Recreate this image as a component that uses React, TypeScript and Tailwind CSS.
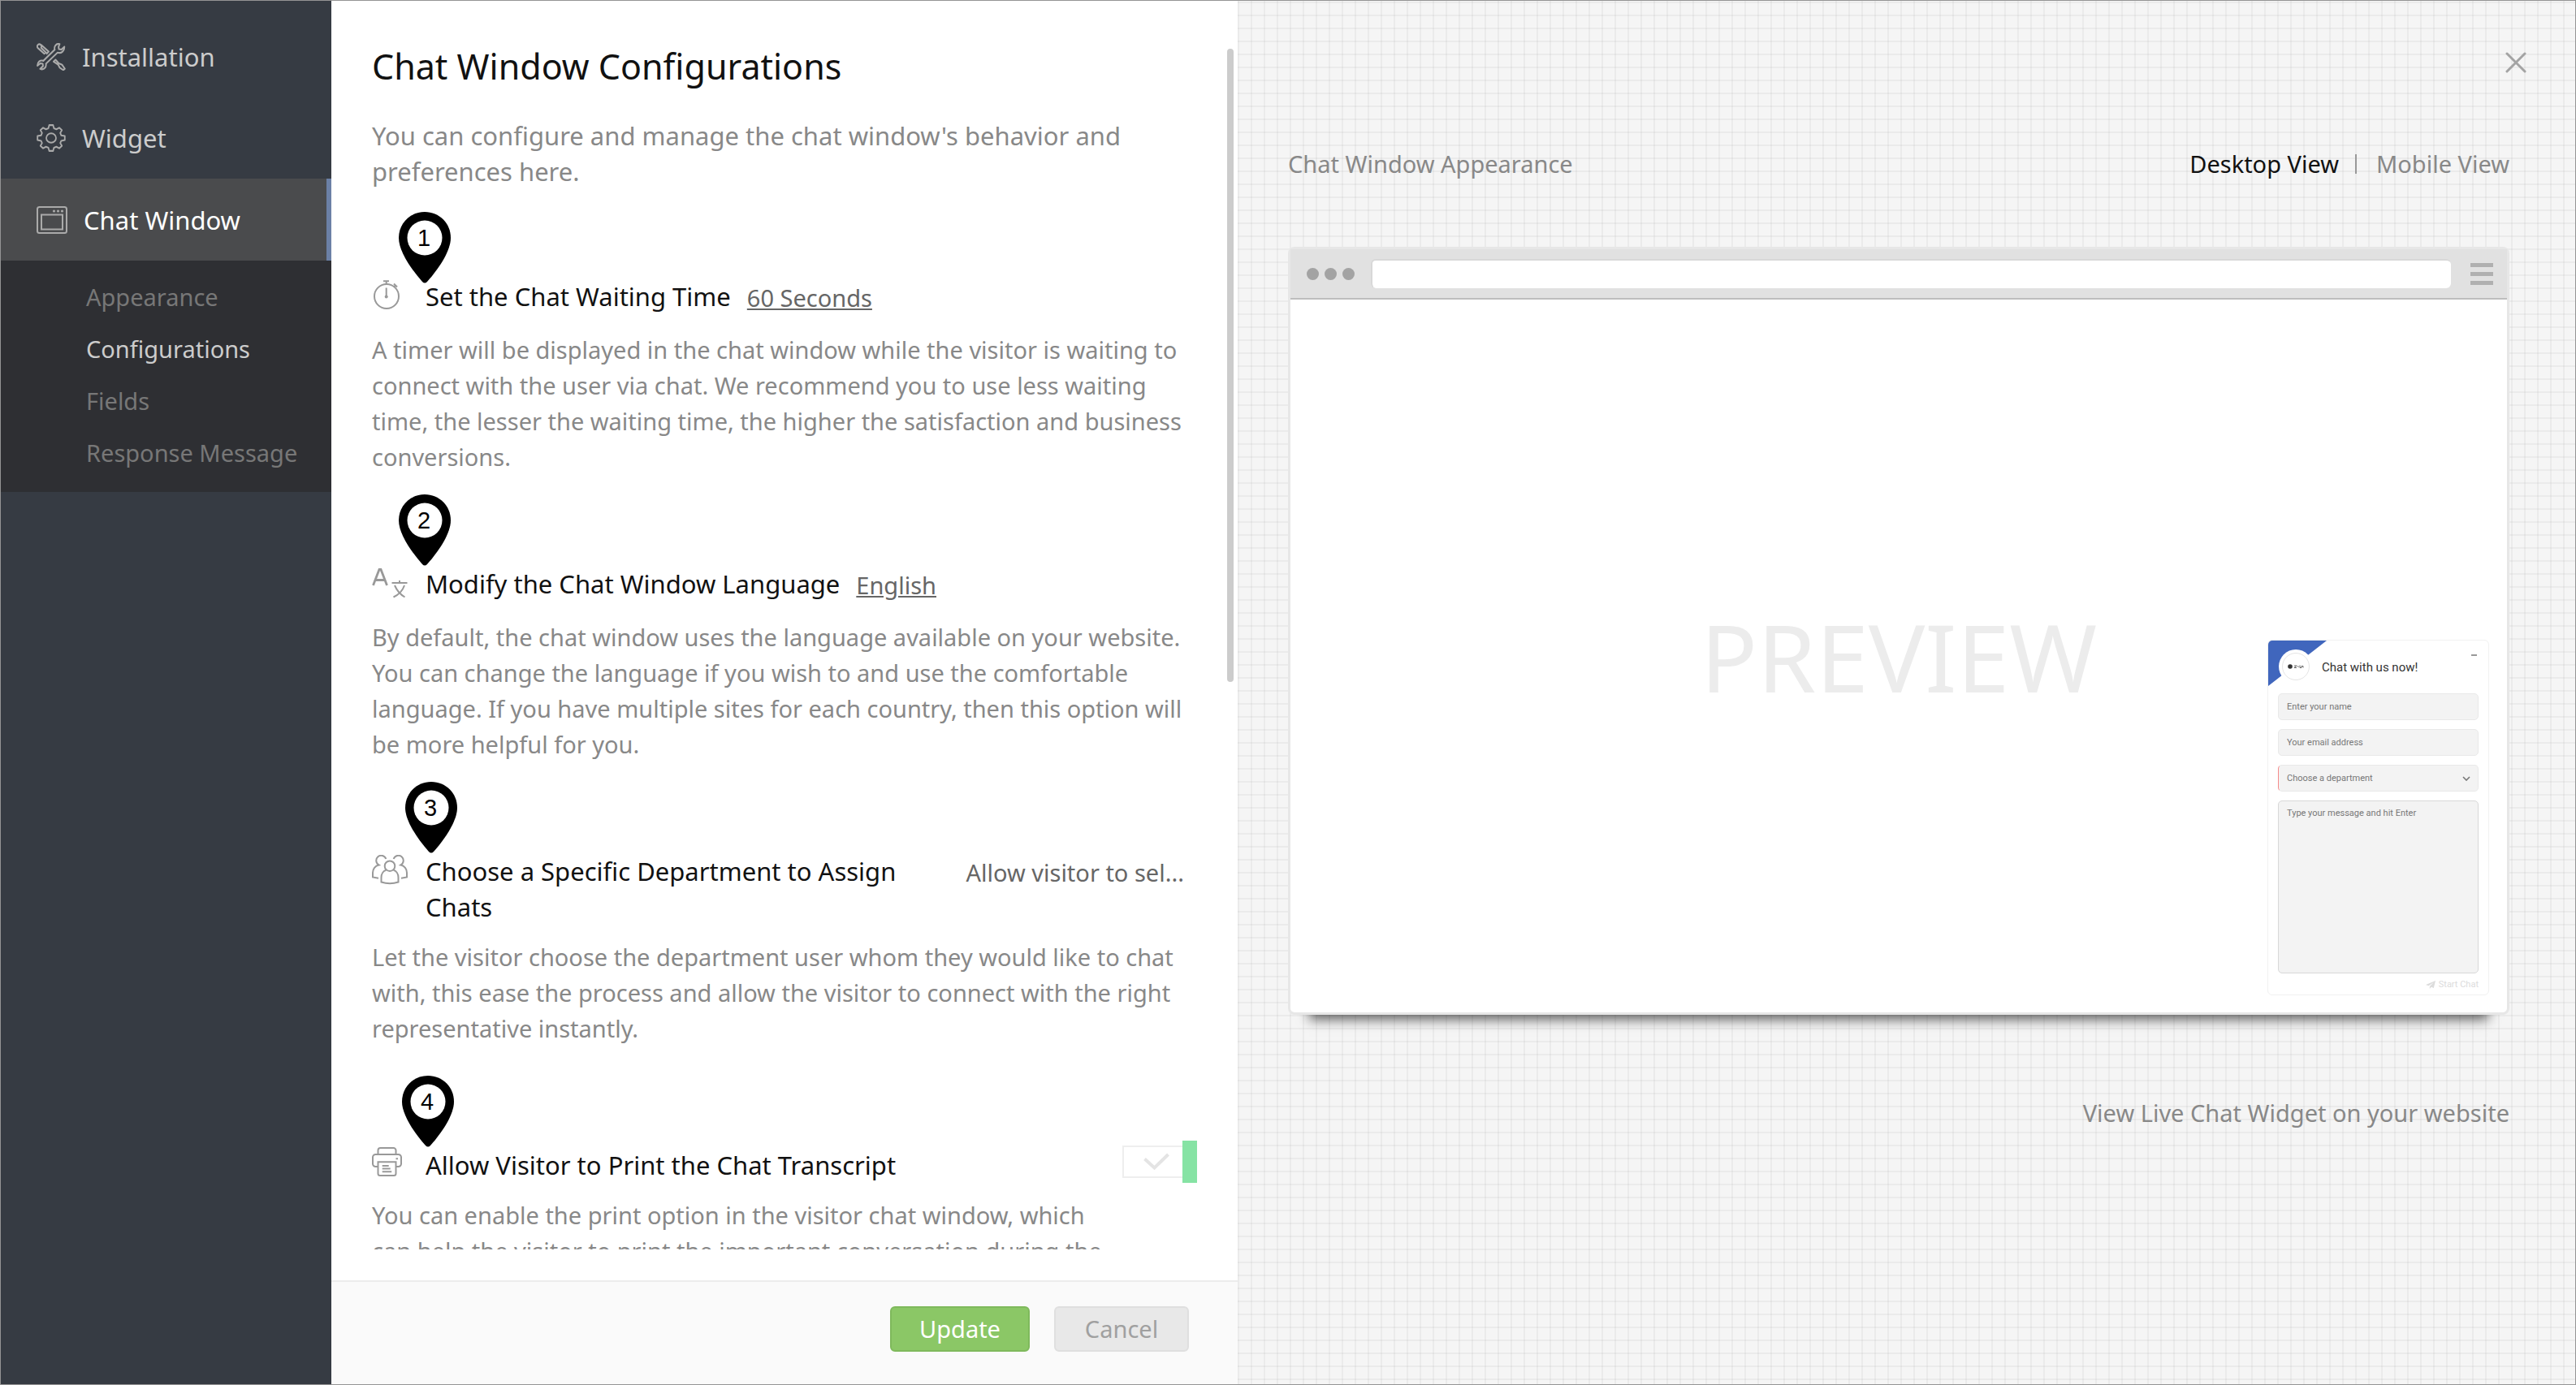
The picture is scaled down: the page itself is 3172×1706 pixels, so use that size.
import React from "react";

const navItems = [
  { label: "Installation", icon: "tools" },
  { label: "Widget", icon: "gear" },
];

const subItems = [
  { label: "Appearance", active: false },
  { label: "Configurations", active: true },
  { label: "Fields", active: false },
  { label: "Response Message", active: false },
];

const ToolsIcon = () => (
  <svg
    viewBox="0 0 36 30"
    className="h-[34px] w-[36px] shrink-0"
    preserveAspectRatio="none"
    fill="none"
    stroke="currentColor"
    strokeWidth="1.9"
    strokeLinejoin="round"
  >
    <path d="M13 11.5 5.6 5.2A2.6 2.6 0 0 0 1.8 1.8 2.6 2.6 0 0 0 1.6 5.4L9.5 11.6 12 9.8" />
    <path d="M5.2 1.6 15 9.3 12 12" />
    <path d="M28.4 1.2c-4-1.2-7.2 2.2-6 6L8.400 19.300c-3.800-1.200-7.400 1.400-7.300 5.400l3.500-2.600 3 .4.400 2.600-3.600 3c4 1.400 8-1.400 7.200-5.600L25.900 10.400c4.600 1.200 8.200-1.400 8.400-6.400l-3.800 3.100-3-.5-.4-2.400Z" />
    <path d="m21 20.200 2.400-2 4 3.800 4 1.600 3.400 4.300-1.800 1.500-4.400-2.600-2.100-3.400Z" />
  </svg>
);

const GearIcon = () => (
  <svg
    viewBox="0 0 36 30"
    preserveAspectRatio="none"
    className="h-[34px] w-[36px] shrink-0"
    fill="none"
    stroke="currentColor"
    strokeWidth="1.8"
    strokeLinejoin="round"
  >
    <path d="M15.600 1h4.800l1 3.400 3 1.100 3.500-1.700 3.300 2.700-2 3 1.200 2.600 4.400.8v4.200l-4.400.9-1.200 2.500 2 3-3.300 2.700-3.500-1.700-3 1.100-1 3.400h-4.800l-1-3.400-3-1.100-3.500 1.700-3.300-2.700 2-3-1.200-2.500L1.200 17.100v-4.200l4.400-.8 1.200-2.600-2-3 3.300-2.700 3.500 1.700 3-1.100Z" />
    <ellipse cx="18" cy="15" rx="6" ry="5" />
  </svg>
);

const WindowIcon = () => (
  <svg
    viewBox="0 0 38 34"
    className="h-[34px] w-[38px] shrink-0"
    fill="none"
    stroke="currentColor"
    strokeWidth="2"
  >
    <rect x="1" y="1" width="36" height="32" rx="2.500" />
    <rect x="6" y="10.500" width="26" height="18" />
    <g fill="currentColor" stroke="none">
      <circle cx="21.500" cy="6" r="1.600" />
      <circle cx="26.500" cy="6" r="1.600" />
      <circle cx="31.500" cy="6" r="1.600" />
    </g>
  </svg>
);

const StopwatchIcon = () => (
  <svg
    viewBox="0 0 34 38"
    className="mt-[2px] h-[38px] w-[34px]"
    fill="none"
    stroke="currentColor"
    strokeWidth="2"
  >
    <circle cx="18" cy="20" r="15" />
    <path d="M14 1.200h7M17.700 1v4M17.700 9.500v11M27 4.500l4 4M29 6.500l-2 2" />
    <circle cx="17.700" cy="20.500" r="2" fill="currentColor" stroke="none" />
  </svg>
);

const LanguageIcon = () => (
  <svg
    viewBox="0 0 44 38"
    className="mt-[2px] h-[38px] w-[44px]"
    fill="none"
    stroke="currentColor"
    strokeWidth="2"
  >
    <path d="M1.500 22 9 2.500h2L18.500 22M4.500 15.500h11" strokeWidth="2.800" />
    <path d="M24.500 19h19M34 16v3M40 22c-2 6-6 11-13.500 14.500M28 22c2.500 6 6.500 11 12.500 14.500" />
  </svg>
);

const PeopleIcon = () => (
  <svg
    viewBox="0 0 44 38"
    className="mt-[2px] h-[38px] w-[44px]"
    fill="none"
    stroke="currentColor"
    strokeWidth="2"
  >
    <circle cx="22" cy="13.700" r="6.300" />
    <path d="M17.500 18.800c-3.500 1-6 4.700-6 9.200v5.500q10.500 3.500 21 0V28c0-4.500-2.500-8.200-6-9.200" />
    <path d="M17.300 5A6.200 6.200 0 1 0 8.500 12.500C4 13.500 1 17.500 1 22v5.500l7 1.200" />
    <path d="M26.700 5A6.200 6.200 0 1 1 35.500 12.500C40 13.500 43 17.500 43 22v5.500l-7 1.200" />
  </svg>
);

const PrinterIcon = () => (
  <svg
    viewBox="0 0 38 36"
    className="h-[36px] w-[38px]"
    fill="none"
    stroke="currentColor"
    strokeWidth="2"
  >
    <path d="M7.500 9V4A3 3 0 0 1 10.500 1h16a3 3 0 0 1 3 3v5" />
    <path d="M7.500 24H4.500A3.500 3.500 0 0 1 1 20.500V12.500A3.500 3.500 0 0 1 4.500 9h28a3.500 3.500 0 0 1 3.500 3.500v8a3.500 3.500 0 0 1-3.500 3.500h-3" />
    <path d="M7.500 18.300h22V32.500a2.500 2.500 0 0 1-2.500 2.500H10a2.500 2.500 0 0 1-2.500-2.500Z" />
    <path d="M12.700 23h8M12.700 26.600h10M12.700 30.200h11.500M29.500 14.300h2.500" />
  </svg>
);

const Pin = ({ number }: { number: number }) => (
  <svg viewBox="0 0 66 88" className="h-[88px] w-[66px]" aria-hidden="true">
    <path d="M33 0C15 0 1 14 1 32c0 15 13 36 29 54q3 3 6 0c16-18 29-39 29-54C65 14 51 0 33 0Z" />
    <circle cx="33" cy="32" r="21.500" fill="#fff" />
    <text
      x="32"
      y="42"
      textAnchor="middle"
      fontSize="29"
      fontFamily="Liberation Sans, sans-serif"
    >
      {number}
    </text>
  </svg>
);

const Setting = ({
  number,
  icon,
  title,
  value,
  lines,
  className,
  pinClass,
}: {
  number: number;
  icon: React.ReactNode;
  title: React.ReactNode;
  value: React.ReactNode;
  lines: string[];
  className: string;
  pinClass: string;
}) => (
  <article className={`relative ${className}`}>
    <div className={`absolute ${pinClass}`}>
      <Pin number={number} />
    </div>
    <div className="flex items-start">
      <span className="w-[66px] shrink-0 text-[#999]">{icon}</span>
      <h2 className="text-[31px] leading-[44px] text-[#111]">{title}</h2>
      {value}
    </div>
    <p className="mt-[18px] text-[29px] leading-[44px] text-[#888]">
      {lines.map((line) => (
        <span key={line} className="block">
          {line}
        </span>
      ))}
    </p>
  </article>
);

const Sidebar = () => (
  <nav className="flex w-[407px] shrink-0 flex-col bg-[#363b43] pt-[19px] text-[31px] leading-[44px] text-[#ccc]">
    {navItems.map((item) => (
      <a key={item.label} href="#" className="flex h-[100px] items-center gap-5 pl-11">
        <span className="text-[#aaa]">
          {item.icon === "tools" ? <ToolsIcon /> : <GearIcon />}
        </span>
        {item.label}
      </a>
    ))}
    <a
      href="#"
      className="flex h-[101px] items-center gap-5 border-r-[6px] border-[#6b80a6] bg-[#4a4b4d] pl-11 text-white"
    >
      <span className="text-[#aaa]">
        <WindowIcon />
      </span>
      Chat Window
    </a>
    <div className="flex flex-col bg-[#2e2f33] pt-[13px] pb-4">
      {subItems.map((item) => (
        <a
          key={item.label}
          href="#"
          className={`flex h-[64px] items-center pl-[105px] text-[29px] ${
            item.active ? "text-[#ccc]" : "text-[#777]"
          }`}
        >
          {item.label}
        </a>
      ))}
    </div>
  </nav>
);

const Configurations = () => (
  <section className="relative flex w-[1116px] shrink-0 flex-col bg-white">
    <div className="min-h-0 flex-1 overflow-hidden pt-[56px] pr-[66px] pl-[50px] whitespace-nowrap">
      <h1 className="text-[43px] leading-[50px] text-[#111]">
        Chat Window Configurations
      </h1>
      <p className="mt-[38px] text-[31px] leading-[44px] text-[#888]">
        You can configure and manage the chat window's behavior and
        <br />
        preferences here.
      </p>

      <Setting
        number={1}
        className="mt-[110px]"
        pinClass="-top-[82px] left-8"
        icon={<StopwatchIcon />}
        title="Set the Chat Waiting Time"
        value={
          <a href="#" className="ml-5 text-[29px] leading-[48px] text-[#666] underline">
            60 Seconds
          </a>
        }
        lines={[
          "A timer will be displayed in the chat window while the visitor is waiting to",
          "connect with the user via chat. We recommend you to use less waiting",
          "time, the lesser the waiting time, the higher the satisfaction and business",
          "conversions.",
        ]}
      />
      <Setting
        number={2}
        className="mt-[112px]"
        pinClass="-top-[88px] left-8"
        icon={<LanguageIcon />}
        title="Modify the Chat Window Language"
        value={
          <a href="#" className="ml-5 text-[29px] leading-[48px] text-[#666] underline">
            English
          </a>
        }
        lines={[
          "By default, the chat window uses the language available on your website.",
          "You can change the language if you wish to and use the comfortable",
          "language. If you have multiple sites for each country, then this option will",
          "be more helpful for you.",
        ]}
      />
      <Setting
        number={3}
        className="mt-[112px]"
        pinClass="-top-[88px] left-10"
        icon={<PeopleIcon />}
        title={
          <>
            Choose a Specific Department to Assign
            <br />
            Chats
          </>
        }
        value={
          <span className="ml-auto text-[29px] leading-[48px] text-[#666]">
            Allow visitor to sel...
          </span>
        }
        lines={[
          "Let the visitor choose the department user whom they would like to chat",
          "with, this ease the process and allow the visitor to connect with the right",
          "representative instantly.",
        ]}
      />
      <Setting
        number={4}
        className="mt-[124px]"
        pinClass="-top-[88px] left-9"
        icon={<PrinterIcon />}
        title="Allow Visitor to Print the Chat Transcript"
        value={
          <label className="-mt-2 -mr-4 ml-auto flex items-center">
            <input
              type="checkbox"
              defaultChecked
              aria-label="Allow visitor to print the chat transcript"
              className="sr-only"
            />
            <span className="flex h-10 w-[74px] items-center justify-center border-2 border-r-0 border-[#eee] pl-2">
              <svg viewBox="0 0 32 22" className="h-[22px] w-8" fill="none" stroke="#e4e4e4" strokeWidth="4">
                <path d="m1.500 7.500 12 11L30.500 2" />
              </svg>
            </span>
            <span className="h-[52px] w-[18px] bg-[#86e3a4]" />
          </label>
        }
        lines={[
          "You can enable the print option in the visitor chat window, which",
          "can help the visitor to print the important conversation during the",
        ]}
      />
    </div>
    <span className="absolute top-[59px] right-[5px] h-[780px] w-2 rounded-full bg-[#ccc]" />
    <footer className="mt-[38px] flex h-[128px] shrink-0 items-start justify-end gap-[30px] border-t-2 border-[#ececec] bg-[#fafafa] pt-[30px] pr-[60px] text-[29px]">
      <button className="h-14 w-[172px] rounded-md border-2 border-[#7fb95c] bg-[#8bc766] text-white">
        Update
      </button>
      <button className="h-14 w-[166px] rounded-md border-2 border-[#dfdfdf] bg-[#e8e8e8] text-[#a0a0a0]">
        Cancel
      </button>
    </footer>
  </section>
);

const ChatWidget = () => (
  <form className="absolute right-[22px] bottom-[21px] flex w-[273px] flex-col rounded-md border border-[#f1f1f1] bg-white px-3 pb-1 font-[Roboto,sans-serif] text-[11px] leading-4 text-[#777]">
    <svg viewBox="0 0 74 58" className="absolute top-0 left-0 h-[58px] w-[74px]">
      <path d="M0 56V5a5 5 0 0 1 5-5h67Z" fill="#4066bd" />
      <circle cx="34" cy="32" r="21" fill="#fff" />
      <circle cx="34" cy="32" r="16.500" fill="none" stroke="#e5e5e5" />
      <circle cx="27" cy="32" r="2.800" fill="#333" />
      <path d="M32 31h3l-3 2.500h3M36 31l1.500 2M39 30.500v3h2v-2h2v2" fill="none" stroke="#444" strokeWidth=".8" />
    </svg>
    <div className="flex h-[65px] items-center pl-[54px] text-[15px] text-[#333]">
      Chat with us now!
    </div>
    <button type="button" aria-label="Minimize" className="absolute top-[17px] right-[14px] h-[2px] w-[7px] bg-[#999]" />
    <div className="flex flex-col gap-[11px]">
      <input aria-label="Name" placeholder="Enter your name" className="h-[33px] rounded-[5px] border border-[#e9e9e9] bg-[#f3f3f3] px-[10px] placeholder:text-[#777]" />
      <input aria-label="Email" placeholder="Your email address" className="h-[33px] rounded-[5px] border border-[#e9e9e9] bg-[#f3f3f3] px-[10px] placeholder:text-[#777]" />
      <div className="relative flex">
        <select aria-label="Department" className="h-[33px] w-full appearance-none rounded-[5px] border border-[#e9e9e9] border-l-[#f58a8a] bg-[#f3f3f3] px-[10px]">
          <option>Choose a department</option>
        </select>
        <svg viewBox="0 0 10 6" className="absolute top-[14px] right-[10px] h-[6px] w-[10px]" fill="none" stroke="#777" strokeWidth="1.600">
          <path d="m1 1 4 4 4-4" />
        </svg>
      </div>
      <textarea aria-label="Message" placeholder="Type your message and hit Enter" className="h-[213px] resize-none rounded-[5px] border border-[#d8d8d8] bg-[#f3f3f3] px-[10px] py-[7px] placeholder:text-[#777]" />
    </div>
    <button type="button" className="mt-[6px] flex items-center gap-1 self-end text-[11px] leading-4 text-[#dcdcdc]">
      <svg viewBox="0 0 12 10" className="h-[10px] w-3" fill="currentColor">
        <path d="M12 0 0 5l3.500 1.200L10 2 4.800 7V10l2-2.300 3 1.300Z" />
      </svg>
      Start Chat
    </button>
  </form>
);

const Preview = () => (
  <main className="flex min-w-0 flex-1 flex-col bg-[#f5f5f5] bg-[linear-gradient(to_right,rgba(0,0,0,0.04)_2px,transparent_2px),linear-gradient(to_bottom,rgba(0,0,0,0.04)_2px,transparent_2px)] bg-size-[16px_16px] bg-position-[0px_1px] pr-[81px] pl-[62px] text-[29px] leading-[44px] text-[#888]">
    <button aria-label="Close" className="mt-[63px] -mr-[21px] self-end text-[#a3a3a3]">
      <svg viewBox="0 0 26 26" className="h-[26px] w-[26px]" fill="none" stroke="currentColor" strokeWidth="3" strokeLinecap="round">
        <path d="m2 2 22 22M24 2 2 24" />
      </svg>
    </button>
    <div className="mt-[90px] flex items-center justify-between">
      <h2>Chat Window Appearance</h2>
      <div className="flex items-center gap-5">
        <a href="#" className="text-[#111]">
          Desktop View
        </a>
        <span className="h-6 w-[2px] bg-[#999]" />
        <a href="#" className="pl-1">
          Mobile View
        </a>
      </div>
    </div>
    <div className="mt-20 flex flex-col rounded-lg border-[3px] border-[#e7e7e7] bg-white shadow-[0_32px_14px_-26px_rgba(0,0,0,0.6)]">
      <div className="flex h-[62px] items-center border-b-2 border-[#bdbdbd] bg-[#e1e1e1] pr-[29px] pl-5">
        <div className="flex gap-[7px]">
          <span className="h-[15px] w-[15px] rounded-full bg-[#a3a3a3]" />
          <span className="h-[15px] w-[15px] rounded-full bg-[#a3a3a3]" />
          <span className="h-[15px] w-[15px] rounded-full bg-[#a3a3a3]" />
        </div>
        <input aria-label="Address" className="ml-5 h-9 min-w-0 flex-1 rounded-md border-t-2 border-l-2 border-[#d8d8d8] bg-white" />
        <div className="-mr-3 ml-6 flex w-7 flex-col gap-[6px]">
          <span className="h-[5px] bg-[#b0b0b0]" />
          <span className="h-[5px] bg-[#b0b0b0]" />
          <span className="h-[5px] bg-[#b0b0b0]" />
        </div>
      </div>
      <div className="relative flex h-[878px] items-center justify-center">
        <span className="text-[116px] leading-none text-[#ececec]">PREVIEW</span>
        <ChatWidget />
      </div>
    </div>
    <a href="#" className="mt-[99px] self-end">
      View Live Chat Widget on your website
    </a>
  </main>
);

export default function App() {
  return (
    <div className="flex h-screen overflow-hidden border border-[#949494] font-['Noto_Sans',sans-serif]">
      <Sidebar />
      <Configurations />
      <Preview />
    </div>
  );
}
